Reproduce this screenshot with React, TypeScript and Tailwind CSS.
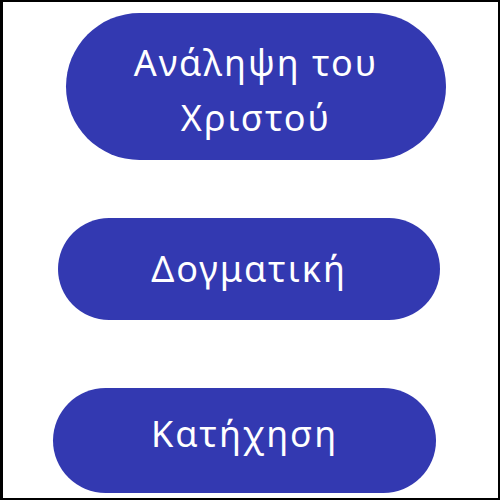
import React from "react";

const font = { fontFamily: '"Noto Sans", "Open Sans", sans-serif' };

export default function App() {
  return (
    <div
      className="w-[500px] h-[500px] bg-white border-2 border-l-[3px] border-black flex flex-col pt-[11px]"
      style={font}
    >
      <div className="ml-[63px] w-[380px] h-[147px] pt-[6px] rounded-full bg-[#3339b1] flex items-center justify-center text-center text-white text-[36px] tracking-[2px] leading-[55px]">
        <span>
          Ανάληψη του
          <br />
          Χριστού
        </span>
      </div>
      <div className="mt-[58px] ml-[55px] w-[382px] h-[102px] rounded-full bg-[#3339b1] flex items-center justify-center text-white text-[36px] tracking-[2px]">
        Δογματική
      </div>
      <div className="mt-[68px] ml-[50px] w-[383px] h-[105px] pb-[14px] rounded-full bg-[#3339b1] flex items-center justify-center text-white text-[36px] tracking-[2px]">
        Κατήχηση
      </div>
    </div>
  );
}
